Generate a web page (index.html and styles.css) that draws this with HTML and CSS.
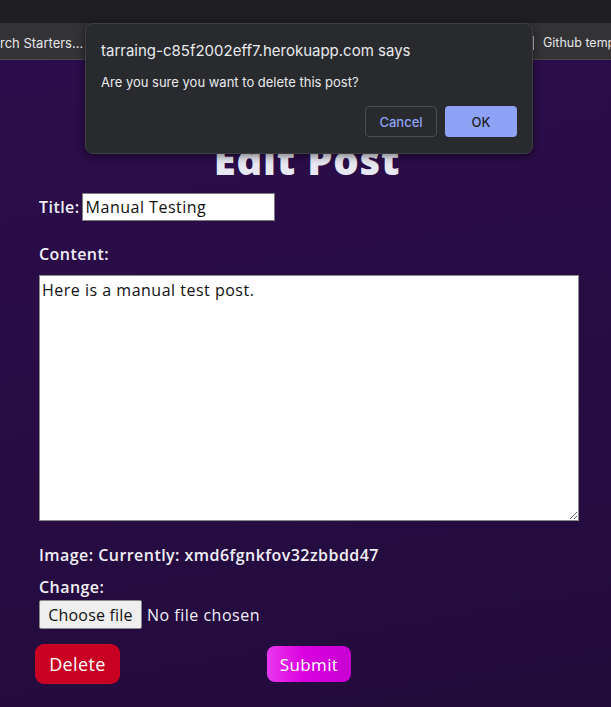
FILE: index.html
```html
<!DOCTYPE html>
<html lang="en">
<head>
<meta charset="utf-8">
<title>Edit Post</title>
<link rel="stylesheet" href="styles.css">
</head>
<body>
<header class="chrome">
  <div class="tabstrip"></div>
  <nav class="bookmarks">
    <span class="bm bm-first">rch Starters...</span>
    <span class="bm-right"><span class="bm-sep"></span><span class="bm">Github temp</span></span>
  </nav>
</header>
<main class="page">
  <h1 class="page-title">Edit Post</h1>
  <form class="post-form">
    <div class="field field-inline">
      <label for="title">Title:</label>
      <input class="text-input" id="title" type="text" value="Manual Testing">
    </div>
    <div class="field field-label"><label for="content">Content:</label></div>
    <textarea class="content-area" id="content">Here is a manual test post.</textarea>
    <div class="field field-image">Image: Currently: xmd6fgnkfov32zbbdd47</div>
    <div class="field field-change">Change:</div>
    <div class="file-row"><span class="file-btn">Choose file</span><span class="file-name">No file chosen</span></div>
    <div class="actions">
      <button type="button" class="btn btn-delete">Delete</button>
      <button type="button" class="btn btn-submit">Submit</button>
    </div>
  </form>
</main>
<div class="dialog" role="alertdialog">
  <div class="dialog-title">tarraing-c85f2002eff7.herokuapp.com says</div>
  <div class="dialog-msg">Are you sure you want to delete this post?</div>
  <div class="dialog-actions">
    <button type="button" class="dbtn dbtn-cancel">Cancel</button>
    <button type="button" class="dbtn dbtn-ok">OK</button>
  </div>
</div>
</body>
</html>
```
FILE: styles.css
```css
* { box-sizing: border-box; }
html, body { margin: 0; padding: 0; }
body {
  width: 611px;
  height: 707px;
  overflow: hidden;
  background: #260c40;
  font-family: "Open Sans", "DejaVu Sans", sans-serif;
  color: #f2eff7;
}
.chrome { height: 60px; background: #202023; }
.tabstrip { height: 23px; background: #1f1f22; }
.bookmarks {
  height: 37px;
  background: #333336;
  border-bottom: 1px solid #4a4a4e;
  display: flex;
  align-items: center;
  overflow: hidden;
  white-space: nowrap;
  font-family: Inter, "Liberation Sans", sans-serif;
  font-size: 13px;
  color: #e6e6e8;
  padding-top: 3px;
}
.bm-right { display: flex; align-items: center; margin-left: auto; flex-shrink: 0; width: 78px; overflow: hidden; font-size: 12.5px; }
.bm-sep { width: 1px; height: 14px; background: #bdbdc0; margin-right: 9px; flex-shrink: 0; }
.page {
  height: 647px;
  background: linear-gradient(170deg, #2c0d4b 0%, #270c43 55%, #220c3b 100%);
  padding: 0 32px 0 35px;
  overflow: hidden;
}
.page-title {
  margin: 0;
  padding-top: 76px;
  height: 124px;
  line-height: 48px;
  font-size: 40px;
  font-weight: 800;
  text-align: center;
  color: #e8e8f2;
  letter-spacing: 0.8px;
}
.post-form { padding-left: 4px; font-size: 16px; font-weight: 600; letter-spacing: 0.45px; }
.field { line-height: 22px; }
.field-inline { margin-top: 9px; display: flex; align-items: center; gap: 2px; height: 28px; }
.text-input {
  width: 193px;
  height: 28px;
  border: 1px solid #7a7a7a;
  padding: 0 3px;
  font: 400 16px "Open Sans", sans-serif;
  letter-spacing: 0.5px;
  color: #111;
  background: #fff;
}
.field-label { margin-top: 22px; }
.content-area {
  display: block;
  margin-top: 10px;
  width: 540px;
  height: 246px;
  border: 1px solid #8a8a8a;
  padding: 3px 2px;
  font: 400 16px/22px "Open Sans", sans-serif;
  letter-spacing: 0.5px;
  color: #111;
  background: #fff;
  resize: both;
}
.field-image { margin-top: 23px; }
.field-change { margin-top: 10px; }
.file-row { margin-top: 2px; display: flex; align-items: center; height: 29px; font-weight: 400; letter-spacing: 0.5px; }
.file-btn {
  height: 29px;
  width: 103px;
  display: flex;
  align-items: center;
  justify-content: center;
  background: #efefef;
  border: 1px solid #8a8a8a;
  border-radius: 2px;
  color: #111;
  letter-spacing: 0.2px;
}
.file-name { margin-left: 5px; }
.actions { margin-top: 15px; margin-left: -4px; display: flex; align-items: center; gap: 147px; height: 40px; }
.btn {
  border: 0;
  color: #fff;
  font: 400 18px "Open Sans", sans-serif;
  letter-spacing: 0.4px;
  border-radius: 9px;
  padding: 0;
}
.btn-delete { width: 85px; height: 40px; background: #c80022; }
.btn-submit { width: 84px; height: 36px; background: linear-gradient(90deg, #ea38ee 0%, #d900e0 45%, #c800d2 100%); font-size: 17px; border-radius: 8px; }
.dialog {
  position: absolute;
  left: 85px;
  top: 23px;
  width: 448px;
  height: 131px;
  background: #292a2d;
  border: 1px solid #3e3f43;
  border-radius: 8px;
  box-shadow: 0 2px 8px rgba(0,0,0,0.5);
  font-family: Inter, "Liberation Sans", sans-serif;
  color: #e8eaed;
  padding: 17px 15px 0 15px;
}
.dialog-title { font-size: 15px; line-height: 20px; }
.dialog-msg { font-size: 13px; line-height: 18px; margin-top: 12px; }
.dialog-actions { display: flex; justify-content: flex-end; gap: 8px; margin-top: 15px; }
.dbtn {
  width: 72px;
  height: 31px;
  border-radius: 4px;
  font: 500 13px Inter, "Liberation Sans", sans-serif;
  padding: 0;
}
.dbtn-cancel { background: transparent; border: 1px solid #4b4c50; color: #8ea3f6; }
.dbtn-ok { background: #8ea3f6; border: 0; color: #202124; }
```
